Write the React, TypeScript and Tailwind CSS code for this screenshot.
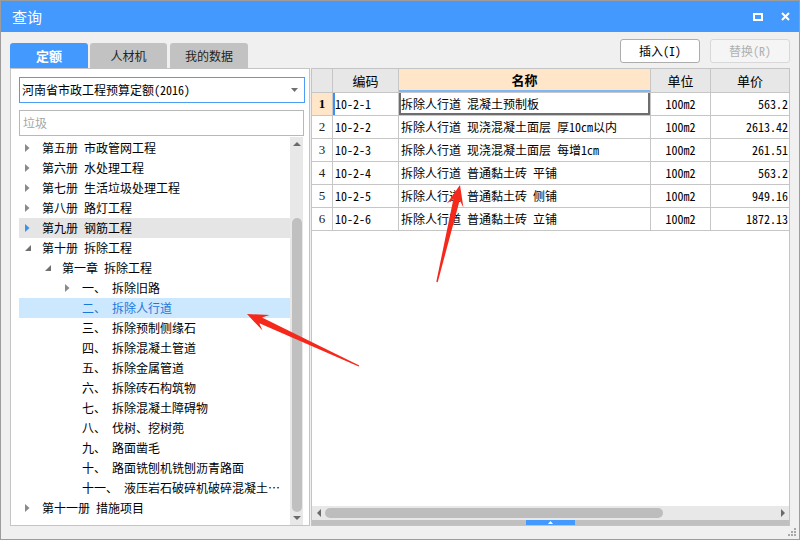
import React from 'react';

type TreeRow = {
  level: 0 | 1 | 2;
  arrow: 'right' | 'down' | 'none';
  prefix: string;
  text: string;
  state?: 'hover' | 'sel';
};

const tree: TreeRow[] = [
  { level: 0, arrow: 'right', prefix: '第五册', text: '市政管网工程' },
  { level: 0, arrow: 'right', prefix: '第六册', text: '水处理工程' },
  { level: 0, arrow: 'right', prefix: '第七册', text: '生活垃圾处理工程' },
  { level: 0, arrow: 'right', prefix: '第八册', text: '路灯工程' },
  { level: 0, arrow: 'right', prefix: '第九册', text: '钢筋工程', state: 'hover' },
  { level: 0, arrow: 'down', prefix: '第十册', text: '拆除工程' },
  { level: 1, arrow: 'down', prefix: '第一章', text: '拆除工程' },
  { level: 2, arrow: 'right', prefix: '一、', text: '拆除旧路' },
  { level: 2, arrow: 'none', prefix: '二、', text: '拆除人行道', state: 'sel' },
  { level: 2, arrow: 'none', prefix: '三、', text: '拆除预制侧缘石' },
  { level: 2, arrow: 'none', prefix: '四、', text: '拆除混凝土管道' },
  { level: 2, arrow: 'none', prefix: '五、', text: '拆除金属管道' },
  { level: 2, arrow: 'none', prefix: '六、', text: '拆除砖石构筑物' },
  { level: 2, arrow: 'none', prefix: '七、', text: '拆除混凝土障碍物' },
  { level: 2, arrow: 'none', prefix: '八、', text: '伐树、挖树蔸' },
  { level: 2, arrow: 'none', prefix: '九、', text: '路面凿毛' },
  { level: 2, arrow: 'none', prefix: '十、', text: '路面铣刨机铣刨沥青路面' },
  { level: 2, arrow: 'none', prefix: '十一、', text: '液压岩石破碎机破碎混凝土…' },
  { level: 0, arrow: 'right', prefix: '第十一册', text: '措施项目' },
];

const indent: Record<number, string> = { 0: 'pl-0', 1: 'pl-[20px]', 2: 'pl-[40px]' };

const rows = [
  ['1', '10-2-1', '拆除人行道 混凝土预制板', '100m2', '563.2'],
  ['2', '10-2-2', '拆除人行道 现浇混凝土面层 厚10cm以内', '100m2', '2613.42'],
  ['3', '10-2-3', '拆除人行道 现浇混凝土面层 每增1cm', '100m2', '261.51'],
  ['4', '10-2-4', '拆除人行道 普通黏土砖 平铺', '100m2', '563.2'],
  ['5', '10-2-5', '拆除人行道 普通黏土砖 侧铺', '100m2', '949.16'],
  ['6', '10-2-6', '拆除人行道 普通黏土砖 立铺', '100m2', '1872.13'],
];

function arrowPts(tx: number, ty: number, px: number, py: number) {
  const dx = px - tx;
  const dy = py - ty;
  const L = Math.hypot(dx, dy);
  const ux = dx / L;
  const uy = dy / L;
  const nx = -uy;
  const ny = ux;
  const h = 21;
  const hw = 8.5;
  const nw = 3.2;
  const tw = 0.7;
  const neck = 15;
  const p = (a: number, b: number) => `${a.toFixed(1)},${b.toFixed(1)}`;
  const bx = px - ux * h;
  const by = py - uy * h;
  const kx = px - ux * neck;
  const ky = py - uy * neck;
  return [
    p(tx + nx * tw, ty + ny * tw),
    p(kx + nx * nw, ky + ny * nw),
    p(bx + nx * hw, by + ny * hw),
    p(px, py),
    p(bx - nx * hw, by - ny * hw),
    p(kx - nx * nw, ky - ny * nw),
    p(tx - nx * tw, ty - ny * tw),
  ].join(' ');
}

function TreeArrow({ kind, blue }: { kind: 'right' | 'down' | 'none'; blue?: boolean }) {
  if (kind === 'right')
    return (
      <svg width="5" height="8" viewBox="0 0 5 8">
        <polygon points="0,0 4.5,4 0,8" fill={blue ? '#3d8ff0' : '#8a8a8a'} />
      </svg>
    );
  if (kind === 'down')
    return (
      <svg width="6" height="6" viewBox="0 0 6 6">
        <polygon points="6,0 6,6 0,6" fill="#6f6f6f" />
      </svg>
    );
  return null;
}

export default function App() {
  return (
    <div className="relative w-[800px] h-[540px] bg-[#f0f0f0] border border-[#9c9c9c] flex flex-col overflow-hidden font-['Noto_Sans_Mono_CJK_SC','Noto_Sans_CJK_SC',sans-serif] text-[12px] text-black">
      {/* title bar */}
      <div className="h-[31px] bg-[#4499ff] flex items-center pl-[11px] pr-[9px] shrink-0">
        <span className="text-white text-[15px] leading-none">查询</span>
        <div className="ml-auto flex items-center gap-[18px]">
          <svg width="10" height="8" viewBox="0 0 10 8">
            <rect x="1" y="1" width="8" height="6" fill="none" stroke="#fff" strokeWidth="2" />
          </svg>
          <svg width="9" height="9" viewBox="0 0 9 9">
            <path d="M1 1 L8 8 M8 1 L1 8" stroke="#fff" strokeWidth="2" />
          </svg>
        </div>
      </div>

      {/* tabs + buttons */}
      <div className="h-[36px] flex px-[9px] shrink-0">
        <div className="self-end flex h-[25px]">
          <div className="w-[78px] rounded-t-[3px] bg-[#4499ff] text-white font-bold text-[13px] flex items-center justify-center">
            定额
          </div>
          <div className="ml-[2px] w-[77px] rounded-t-[3px] bg-[#c2c2c2] text-[#222] text-[12px] flex items-center justify-center">
            人材机
          </div>
          <div className="ml-[3px] w-[78px] rounded-t-[3px] bg-[#c2c2c2] text-[#222] text-[12px] flex items-center justify-center">
            我的数据
          </div>
        </div>
        <div className="ml-auto mt-[7px] flex gap-[10px] h-[24px]">
          <div className="w-[80px] h-[24px] bg-white border border-[#adadad] rounded-[3px] flex items-center justify-center text-[12px] text-black">
            插入(I)
          </div>
          <div className="w-[80px] h-[24px] bg-[#f5f5f5] border border-[#d8d8d8] rounded-[3px] flex items-center justify-center text-[12px] text-[#b0b0b0]">
            替换(R)
          </div>
        </div>
      </div>

      {/* main */}
      <div className="h-[458px] flex px-[9px] gap-[1px] shrink-0">
        {/* left panel */}
        <div className="w-[300px] bg-white border border-[#c4c4c4] flex flex-col">
          <div className="ml-[8px] mt-[8px] w-[286px] h-[26px] border border-[#4d9cf5] flex items-center pl-[2px] pr-[6px]">
            <span>河南省市政工程预算定额(2016)</span>
            <svg className="ml-auto" width="7" height="4" viewBox="0 0 7 4">
              <polygon points="0,0 7,0 3.5,4" fill="#707070" />
            </svg>
          </div>
          <div className="ml-[8px] mt-[7px] w-[285px] h-[26px] border border-[#b8b8b8] flex items-center pl-[3px] text-[#a6a6a6]">
            垃圾
          </div>
          <div className="mt-[1px] flex flex-1 min-h-0">
            <div className="ml-[8px] w-[271px] pt-[1px]">
              {tree.map((r, i) => {
                const bg = r.state === 'hover' ? 'bg-[#e5e5e5]' : r.state === 'sel' ? 'bg-[#cce8ff]' : '';
                const color = r.state === 'sel' ? 'text-[#1c76dc]' : 'text-black';
                return (
                  <div key={i} className={`h-[20px] flex items-center ${bg} ${color}`}>
                    <div className={`flex items-center ${indent[r.level]}`}>
                      <div className="w-[23px] h-[20px] flex items-center pl-[6px]">
                        <TreeArrow kind={r.arrow} blue={r.state === 'hover'} />
                      </div>
                      <span className="whitespace-nowrap">{r.prefix}</span>
                      <span className="ml-[6px] whitespace-nowrap">{r.text}</span>
                    </div>
                  </div>
                );
              })}
            </div>
            {/* vertical scrollbar */}
            <div className="w-[13px] bg-[#e8e8e8] flex flex-col items-center pb-[2px]">
              <div className="h-[14px] flex items-center justify-center">
                <svg width="8" height="4" viewBox="0 0 8 4">
                  <polygon points="0,4 8,4 4,0" fill="#6a6a6a" />
                </svg>
              </div>
              <div className="mt-[67px] w-[10px] h-[294px] rounded-full bg-[#c0c0c0]" />
              <div className="mt-auto h-[10px] flex items-center justify-center">
                <svg width="8" height="4" viewBox="0 0 8 4">
                  <polygon points="0,0 8,0 4,4" fill="#6a6a6a" />
                </svg>
              </div>
            </div>
          </div>
        </div>

        {/* right panel */}
        <div className="w-[479px] bg-white border border-[#c4c4c4] flex flex-col">
          <div className="flex h-[24px] bg-[#e7e7e7] border-b border-[#c6c6c6] text-[13px]">
            <div className="w-[21px] border-r border-[#c6c6c6]" />
            <div className="w-[66px] border-r border-[#c6c6c6] flex items-center justify-center">编码</div>
            <div className="w-[252px] border-r border-[#c6c6c6] bg-[#ffe6c8] border-b-2 border-b-[#7fb6f5] flex items-center justify-center font-bold">
              名称
            </div>
            <div className="w-[60px] border-r border-[#c6c6c6] flex items-center justify-center">单位</div>
            <div className="w-[78px] flex items-center justify-center">单价</div>
          </div>
          {rows.map((r, i) => {
            const first = i === 0;
            return (
              <div key={i} className="flex h-[23px] border-b border-[#c6c6c6]">
                <div
                  className={`w-[21px] border-r border-[#c6c6c6] flex items-center justify-center font-['Liberation_Serif',serif] text-[13px] ${
                    first ? 'bg-[#ffe6c8] font-bold' : 'text-[#222]'
                  }`}
                >
                  {r[0]}
                </div>
                <div
                  className={`w-[66px] border-r border-[#c6c6c6] flex items-center pl-[2px] ${
                    first ? 'shadow-[inset_2px_0_0_#3d8ff0]' : ''
                  }`}
                >
                  {r[1]}
                </div>
                <div
                  className={`w-[252px] border-r border-[#c6c6c6] flex items-center pl-[2px] whitespace-nowrap overflow-hidden ${
                    first ? 'shadow-[inset_2px_0_0_#6e6e6e,inset_-2px_0_0_#6e6e6e,inset_0_-2px_0_#6e6e6e]' : ''
                  }`}
                >
                  {r[2]}
                </div>
                <div className="w-[60px] border-r border-[#c6c6c6] flex items-center justify-center">{r[3]}</div>
                <div className="w-[78px] flex items-center justify-end pr-[1px]">{r[4]}</div>
              </div>
            );
          })}
          <div className="flex-1" />
          {/* horizontal scrollbar */}
          <div className="h-[14px] bg-[#e8e8e8] flex items-center">
            <div className="w-[13px] flex items-center justify-center">
              <svg width="4" height="8" viewBox="0 0 4 8">
                <polygon points="4,0 4,8 0,4" fill="#6a6a6a" />
              </svg>
            </div>
            <div className="w-[338px] h-[10px] rounded-full bg-[#bdbdbd]" />
            <div className="ml-auto w-[13px] flex items-center justify-center">
              <svg width="4" height="8" viewBox="0 0 4 8">
                <polygon points="0,0 4,4 0,8" fill="#6a6a6a" />
              </svg>
            </div>
          </div>
          <div className="h-[5px] bg-[#c0c0c0] flex justify-center">
            <div className="w-[49px] h-[5px] bg-[#4499ff] flex items-center justify-center">
              <svg width="5" height="3" viewBox="0 0 5 3">
                <polygon points="0,3 5,3 2.5,0" fill="#fff" />
              </svg>
            </div>
          </div>
        </div>
      </div>

      {/* resize grip */}
      <svg className="absolute right-[2px] bottom-[2px]" width="9" height="9" viewBox="0 0 9 9">
        <rect x="6" y="0" width="2" height="2" fill="#a8a8a8" />
        <rect x="3" y="3" width="2" height="2" fill="#a8a8a8" />
        <rect x="6" y="3" width="2" height="2" fill="#a8a8a8" />
        <rect x="0" y="6" width="2" height="2" fill="#a8a8a8" />
        <rect x="3" y="6" width="2" height="2" fill="#a8a8a8" />
        <rect x="6" y="6" width="2" height="2" fill="#a8a8a8" />
      </svg>

      {/* red annotation arrows */}
      <svg className="absolute left-0 top-0 pointer-events-none" width="800" height="540" viewBox="0 0 800 540">
        <polygon points={arrowPts(358, 365, 246, 313)} fill="#f5281c" />
        <polygon points={arrowPts(436, 281, 459, 184)} fill="#f5281c" />
      </svg>
    </div>
  );
}
